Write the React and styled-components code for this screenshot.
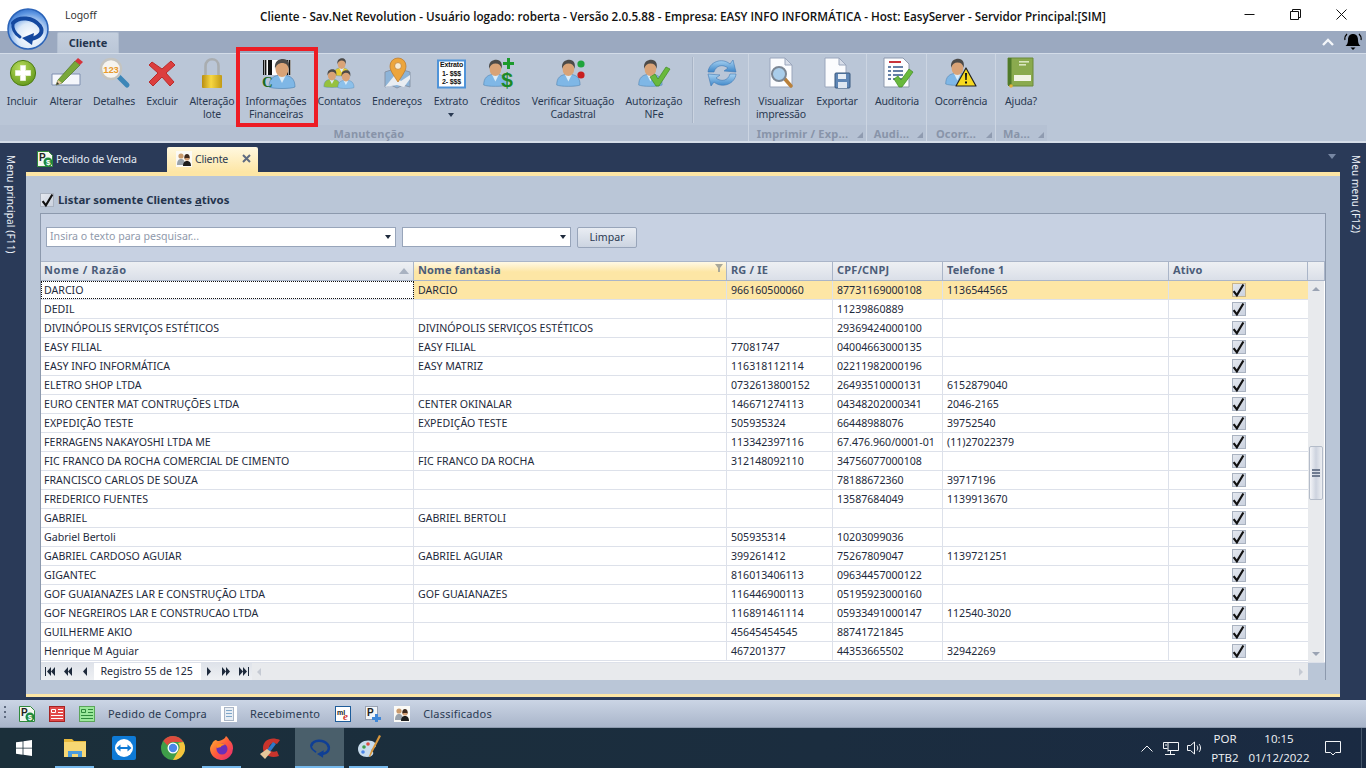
import React from 'react'
import styled, { createGlobalStyle } from 'styled-components'

const GlobalStyle = createGlobalStyle`
  html, body { margin: 0; padding: 0; height: 100%; overflow: hidden; }
  body { font-family: "Noto Sans", "Liberation Sans", sans-serif; font-size: 10.6px; color: #1e2a3c; }
  #root { width: 1366px; height: 768px; }
`

const Page = styled.div`
  position: relative;
  width: 1366px;
  height: 768px;
  display: flex;
  flex-direction: column;
  overflow: hidden;
`

/* ---------- title bar ---------- */
const TitleBar = styled.div`
  height: 31px;
  flex: none;
  background: #fff;
  display: grid;
  grid-template-columns: 1fr auto 1fr;
  align-items: center;
`
const Logoff = styled.div`
  padding: 0 0 0 65px;
  margin-top: -1px;
  font-size: 10.4px;
  color: #333;
`
const WindowTitle = styled.div`
  font-family: "Open Sans", sans-serif;
  font-size: 11.7px;
  font-weight: 600;
  color: #111;
  white-space: nowrap;
`
const WindowButtons = styled.div`
  display: flex;
  justify-content: flex-end;
  height: 31px;
  margin-right: 2px;
`
const WindowButton = styled.div`
  width: 46px;
  display: flex;
  align-items: center;
  justify-content: center;
  padding-bottom: 3px;
`
const LogoHolder = styled.div`
  position: absolute;
  left: 7px;
  top: 8px;
  width: 42px;
  height: 42px;
`

/* ---------- ribbon ---------- */
const TabStrip = styled.div`
  height: 22px;
  flex: none;
  background: #9ba9c0;
  display: flex;
  align-items: flex-end;
  justify-content: space-between;
  padding: 0 4px 0 57px;
`
const RibbonTab = styled.div`
  width: 62px;
  height: 21px;
  box-sizing: border-box;
  background: linear-gradient(#c4cfde, #bac6d7);
  border: 1px solid #b2bfd1;
  border-bottom: none;
  border-radius: 2px 2px 0 0;
  font-weight: 700;
  font-size: 11px;
  color: #24344d;
  text-align: center;
  line-height: 20px;
`
const TabStripTools = styled.div`
  display: flex;
  align-items: center;
  gap: 10px;
  height: 22px;
`
const Ribbon = styled.div`
  height: 90px;
  flex: none;
  box-sizing: border-box;
  background: #bac6d7;
  border-top: 1px solid #d3dce8;
  border-bottom: 2px solid #d5dde8;
  display: flex;
`
const RibbonGroup = styled.div`
  width: ${p => p.$w}px;
  flex: none;
  box-sizing: border-box;
  display: flex;
  flex-direction: column;
  border-right: ${p => (p.$last ? 'none' : '1px solid #ccd5e2')};
`
const GroupButtons = styled.div`
  height: 71px;
  display: flex;
  flex: none;
`
const GroupCaption = styled.div`
  position: relative;
  height: 16px;
  background: #b5c1d3;
  color: #8894a9;
  font-weight: 700;
  font-size: 11px;
  letter-spacing: 0.2px;
  text-align: center;
  line-height: 17px;
  padding-right: ${p => p.$pad}px;
`
const Launcher = styled.span`
  position: absolute;
  right: 3px;
  bottom: 3px;
  width: 0;
  height: 0;
  border-left: 6px solid transparent;
  border-bottom: 6px solid #8f9bb0;
`
const RibbonButton = styled.div`
  width: ${p => p.$w}px;
  flex: none;
  display: flex;
  flex-direction: column;
  align-items: center;
  padding-top: 3px;
  font-size: 10.5px;
  letter-spacing: -0.15px;
  line-height: 13px;
  color: #2a3a52;
  text-align: center;
  white-space: pre-line;
  svg { flex: none; margin-bottom: 6px; overflow: visible; }
`
const DropArrow = styled.span`
  width: 0;
  height: 0;
  margin-top: 5px;
  border-left: 3px solid transparent;
  border-right: 3px solid transparent;
  border-top: 4px solid #2a3a52;
`
const RibbonSeparator = styled.div`
  width: 1px;
  height: 66px;
  margin: 3px 4px 0 4px;
  flex: none;
  background: #a8b4c6;
  box-shadow: 1px 0 0 #cbd4e1;
`
const Highlight = styled.div`
  position: absolute;
  left: 236px;
  top: 47px;
  width: 82px;
  height: 80px;
  box-sizing: border-box;
  border: 4px solid #ed1c24;
`

/* ---------- workspace ---------- */
const Workspace = styled.div`
  flex: 1;
  min-height: 0;
  background: #2a3a58;
  display: flex;
`
const Rail = styled.div`
  width: 26px;
  flex: none;
  box-sizing: border-box;
  padding: 12px ${p => (p.$right ? 0 : 4)}px 0 ${p => (p.$right ? 6 : 0)}px;
  display: flex;
  justify-content: center;
`
const RailLabel = styled.div`
  writing-mode: vertical-rl;
  color: #eef2f8;
  font-size: 10px;
  letter-spacing: 0.15px;
  white-space: nowrap;
`
const Center = styled.div`
  flex: 1;
  min-width: 0;
  display: flex;
  flex-direction: column;
  padding-bottom: 3px;
`
const DocTabs = styled.div`
  height: 25px;
  margin-top: 4px;
  flex: none;
  display: flex;
  align-items: stretch;
  position: relative;
  padding-left: 2px;
`
const DocTab = styled.div`
  width: ${p => p.$w}px;
  box-sizing: border-box;
  display: flex;
  align-items: center;
  gap: 3px;
  padding: 0 7px 2px 9px;
  margin-right: 7px;
  letter-spacing: -0.2px;
  color: ${p => (p.$active ? '#2a3a52' : '#e6ecf4')};
  background: ${p => (p.$active ? 'linear-gradient(#fff8e0, #fde6a5)' : 'transparent')};
  border-radius: 2px 2px 0 0;
`
const TabClose = styled.span`
  margin-left: auto;
  display: flex;
`
const TabsMenu = styled.span`
  position: absolute;
  right: 4px;
  top: 7px;
  width: 0;
  height: 0;
  border-left: 4px solid transparent;
  border-right: 4px solid transparent;
  border-top: 5px solid #7787a3;
`
const Panel = styled.div`
  flex: 1;
  min-height: 0;
  box-sizing: border-box;
  background: #bac6d7;
  border-top: 4px solid #fde6a5;
  border-bottom: 3px solid #fde6a5;
  padding: 17px 14px 14px 14px;
  display: flex;
  flex-direction: column;
`
const ActiveFilter = styled.div`
  height: 14px;
  flex: none;
  display: flex;
  align-items: center;
  gap: 4px;
  margin-bottom: 6px;
  font-weight: 700;
  font-size: 11.4px;
  color: #24344d;
  span:last-child { margin-top: -2px; }
  u { text-underline-offset: 1px; }
`
const CheckBox = styled.span`
  width: 14px;
  height: 14px;
  flex: none;
  box-sizing: border-box;
  display: inline-flex;
  align-items: center;
  justify-content: center;
  background: linear-gradient(135deg, #e4e8ef, #cbd2df);
  border: 1px solid ${p => (p.$warm ? '#c9b58a' : '#a9b2c0')};
`
const GridBox = styled.div`
  flex: 1;
  min-height: 0;
  display: flex;
  flex-direction: column;
  background: #c7d1e2;
  border: 1px solid #8c99ad;
`
const SearchBar = styled.div`
  height: 47px;
  flex: none;
  box-sizing: border-box;
  padding: 13px 0 0 5px;
  display: flex;
  align-items: flex-start;
  gap: 6px;
`
const Combo = styled.div`
  width: ${p => p.$w}px;
  height: 20px;
  box-sizing: border-box;
  background: #fff;
  border: 1px solid #98a5ba;
  display: flex;
  align-items: center;
  justify-content: space-between;
  padding: 0 4px 2px 3px;
  color: #8f99ab;
`
const ComboArrow = styled.span`
  width: 0;
  height: 0;
  margin-top: 2px;
  border-left: 3.5px solid transparent;
  border-right: 3.5px solid transparent;
  border-top: 4px solid #1e2a3c;
`
const ClearButton = styled.div`
  width: 60px;
  height: 21px;
  box-sizing: border-box;
  background: linear-gradient(#e9edf3, #ccd4e1);
  border: 1px solid #98a5ba;
  border-radius: 2px;
  text-align: center;
  line-height: 18px;
  color: #2a3a52;
`
const columns = '373px 313px 106px 110px 226px 139px'
const HeaderRow = styled.div`
  height: 20px;
  flex: none;
  display: grid;
  grid-template-columns: ${columns} 1fr;
  border-top: 1px solid #aab5c8;
  border-bottom: 1px solid #aab5c8;
  box-sizing: border-box;
`
const HeaderCell = styled.div`
  position: relative;
  box-sizing: border-box;
  padding-left: ${p => (p.$first ? 3 : 4)}px;
  font-weight: 700;
  font-size: 11px;
  line-height: 16px;
  color: #4c5d79;
  letter-spacing: ${p => (p.$first ? 0.55 : 0.15)}px;
  background: ${p => (p.$hot ? 'linear-gradient(#fff9e6, #fde6a5 55%)' : 'linear-gradient(#eef0f3, #dadfe8)')};
  border-right: 1px solid #aab5c8;
`
const SortMark = styled.span`
  position: absolute;
  right: 4px;
  top: 6px;
  width: 0;
  height: 0;
  border-left: 5px solid transparent;
  border-right: 5px solid transparent;
  border-bottom: 6px solid #a9b2c1;
`
const FilterMark = styled.span`
  position: absolute;
  right: 3px;
  top: 2px;
  display: flex;
`
const Body = styled.div`
  height: 381px;
  flex: none;
  display: flex;
  background: #fff;
`
const Rows = styled.div`
  width: 1267px;
  flex: none;
`
const Row = styled.div`
  height: 19px;
  box-sizing: border-box;
  display: grid;
  grid-template-columns: ${columns};
  background: ${p => (p.$selected ? '#fde6a5' : '#fff')};
  border-bottom: 1px solid #dde1ea;
`
const Cell = styled.div`
  box-sizing: border-box;
  padding-left: ${p => (p.$first ? 3 : 4)}px;
  line-height: 18px;
  color: #1e2a3c;
  white-space: nowrap;
  overflow: hidden;
  border-right: 1px solid #dde1ea;
`
const FocusCell = styled(Cell)`
  background: #fff;
  outline: 1px dotted #111;
  outline-offset: -1px;
`
const CheckCell = styled(Cell)`
  display: flex;
  align-items: center;
  justify-content: center;
  padding: 0;
  border-right: none;
`
const VScroll = styled.div`
  position: relative;
  width: 16px;
  flex: none;
  background: #e8eaed;
`
const ScrollArrow = styled.span`
  position: absolute;
  left: 4px;
  width: 0;
  height: 0;
  border-left: 4px solid transparent;
  border-right: 4px solid transparent;
  ${p => (p.$up ? 'top: 6px; border-bottom: 4px solid #9aa3b3;' : 'bottom: 6px; border-top: 4px solid #9aa3b3;')}
`
const ScrollThumb = styled.div`
  position: absolute;
  left: 1px;
  top: 165px;
  width: 14px;
  height: 54px;
  box-sizing: border-box;
  border: 1px solid #b4bcc9;
  border-radius: 2px;
  background: linear-gradient(90deg, #f4f5f8, #cdd3df 50%, #eceef2);
  display: flex;
  flex-direction: column;
  justify-content: center;
  align-items: center;
  gap: 1px;
`
const Grip = styled.span`
  width: 8px;
  height: 2px;
  background: #6f7b90;
`
const Footer = styled.div`
  flex: 1;
  display: flex;
  border-top: 1px solid #dde1ea;
`
const Pager = styled.div`
  width: 211px;
  flex: none;
  background: linear-gradient(#dfe3ea, #eef0f3);
  display: flex;
  align-items: center;
`
const PagerButton = styled.span`
  width: ${p => p.$w || 18}px;
  display: flex;
  justify-content: center;
`
const PagerLabel = styled.div`
  width: 107px;
  height: 100%;
  flex: none;
  box-sizing: border-box;
  background: #fff;
  padding-left: 7px;
  line-height: 17px;
  color: #1e2a3c;
`
const HScroll = styled.div`
  flex: 1;
  background: #e8eaed;
  display: flex;
  align-items: center;
  justify-content: space-between;
  padding: 0 5px;
`
const HArrow = styled.span`
  width: 0;
  height: 0;
  border-top: 4px solid transparent;
  border-bottom: 4px solid transparent;
  ${p => (p.$left ? 'border-right: 4px solid #c5cad3;' : 'border-left: 4px solid #c5cad3;')}
`
const Corner = styled.div`
  width: 17px;
  flex: none;
  background: #bac6d7;
`

/* ---------- status bar and taskbar ---------- */
const StatusBar = styled.div`
  height: 28px;
  flex: none;
  box-sizing: border-box;
  background: linear-gradient(#cbd5e5, #a9b5ca);
  border-bottom: 1px solid #8c99ad;
  display: flex;
  align-items: center;
  padding-left: 4px;
`
const StatusGrip = styled.div`
  width: 2px;
  height: 15px;
  margin-right: 13px;
  background: repeating-linear-gradient(#5f6b80 0 2px, transparent 2px 5px);
`
const StatusIcon = styled.span`
  width: 16px;
  height: 16px;
  display: flex;
  margin-right: ${p => p.$gap}px;
`
const StatusText = styled.span`
  font-size: 11px;
  letter-spacing: 0.2px;
  color: #2a3a52;
  margin-right: ${p => p.$gap}px;
`
const Taskbar = styled.div`
  height: 40px;
  flex: none;
  background: linear-gradient(90deg, #1b2f3a, #1b2d3f 60%, #1a2a42);
  display: flex;
  color: #f2f4f7;
`
const StartSlot = styled.div`
  width: 50px;
  flex: none;
  display: flex;
  align-items: center;
  padding: 0 0 0 16px;
  box-sizing: border-box;
`
const TaskSlot = styled.div`
  position: relative;
  width: 49px;
  flex: none;
  display: flex;
  align-items: center;
  justify-content: center;
  background: ${p => (p.$active ? '#4a5f6b' : 'transparent')};
  &::after {
    content: '';
    display: ${p => (p.$open ? 'block' : 'none')};
    position: absolute;
    bottom: 0;
    height: 2px;
    left: ${p => (p.$active ? 0 : 5)}px;
    right: ${p => (p.$active ? 0 : 5)}px;
    background: #76b9ed;
  }
`
const Tray = styled.div`
  margin-left: auto;
  display: flex;
  align-items: center;
  height: 100%;
`
const TrayIcon = styled.span`
  display: flex;
  margin-right: ${p => p.$gap}px;
`
const TrayText = styled.div`
  width: ${p => p.$w}px;
  text-align: center;
  font-size: 11.5px;
  line-height: 19px;
  font-family: "Open Sans", sans-serif;
  margin-right: ${p => p.$gap || 0}px;
`
const ShowDesktop = styled.div`
  width: 4px;
  height: 100%;
  border-left: 1px solid #45566a;
`

/* ---------- drawn icons ---------- */
const Bust = ({ x = 0, y = 0, s = 1, shirt = '#7fb7e6' }) => (
  <g transform={`translate(${x} ${y}) scale(${s})`}>
    <path d="M3 30c0-8 4-12 13-12s13 4 13 12c-4 2-22 2-26 0z" fill={shirt} stroke="#4a7fae" strokeWidth=".6" />
    <path d="M12 18l4 8 4-8z" fill="#dcecf8" />
    <ellipse cx="16" cy="12" rx="6.5" ry="8" fill="#d9a377" />
    <path d="M9 12C8 4 13 2 17 2c5 0 7 4 6 10-1-4-3-6-7-6-3 0-6 2-7 6z" fill="#4c4a48" />
  </g>
)

const Barcode = () => (
  <g>
    <rect x="3" y="3" width="28" height="15" fill="#fff" />
    {[3, 5, 8, 10, 25, 27, 29].map(x => (
      <rect key={x} x={x} y="3" width={x % 2 ? 1.4 : 2} height="15" fill="#111" />
    ))}
  </g>
)

const icons = {
  plus: (
    <>
      <defs>
        <radialGradient id="ip" cx=".4" cy=".3" r=".8">
          <stop offset="0" stopColor="#b8dc5c" />
          <stop offset="1" stopColor="#5d9316" />
        </radialGradient>
      </defs>
      <circle cx="17" cy="16" r="12.6" fill="url(#ip)" stroke="#4d7d12" />
      <path d="M14.5 8.500h5v5h5v5h-5v5h-5v-5h-5v-5h5z" fill="#fff" stroke="#e3efd0" strokeLinejoin="round" />
    </>
  ),
  edit: (
    <>
      <path d="M2 17h28v11H2z" fill="#f4f6fb" stroke="#7f8fb0" />
      <path d="M8 23L25 4l5 4-18 18-6 2z" fill="#79a83a" stroke="#4d7425" strokeWidth=".7" />
      <path d="M25 4l3-3 5 4-3 3z" fill="#d4353c" />
      <path d="M8 23l4 3-6 2z" fill="#e9c9a0" />
      <path d="M6 28l1.500-3 1.500 2z" fill="#333" />
    </>
  ),
  details: (
    <>
      <path d="M20 19l9 9" stroke="#3c86b8" strokeWidth="5" strokeLinecap="round" />
      <circle cx="13" cy="12" r="10" fill="#f6f4ef" stroke="#c4c4c0" strokeWidth="2.4" />
      <text x="13" y="15.500" textAnchor="middle" fontFamily="Liberation Sans" fontWeight="700" fontSize="9.5" fill="#e99a2c">123</text>
    </>
  ),
  remove: (
    <path d="M6 5l10 7 9-8 4 4-9 8 8 9-4 4-8-9-9 9-4-4 9-9-9-8z" fill="#dc3e3e" stroke="#b92c2c" strokeWidth="1" strokeLinejoin="round" />
  ),
  lock: (
    <>
      <defs>
        <linearGradient id="il" x1="0" x2="1">
          <stop offset="0" stopColor="#b98e10" />
          <stop offset=".45" stopColor="#f7d743" />
          <stop offset="1" stopColor="#c29a15" />
        </linearGradient>
      </defs>
      <path d="M9.500 19V9c0-9 13-9 13 0v10" fill="none" stroke="#a9adb0" strokeWidth="2.6" />
      <rect x="6" y="18" width="20" height="13" rx="1" fill="url(#il)" />
    </>
  ),
  finance: (
    <>
      <Barcode />
      <Bust x={6} y={0} />
      <text x="2" y="30" fontFamily="Liberation Serif" fontWeight="700" fontSize="15" fill="#1c6b1e">C</text>
    </>
  ),
  contacts: (
    <>
      <Bust x={9} y={0} s={0.6} shirt="#e4cc33" />
      <Bust x={-1} y={11} s={0.62} shirt="#96c13d" />
      <Bust x={13} y={12} s={0.62} shirt="#8cc0ea" />
    </>
  ),
  map: (
    <>
      <path d="M4 15l6-2 6 3 6-3 7 2v15l-7-2-6 3-6-3-6 2z" fill="#8db4d8" stroke="#8895a8" />
      <path d="M4 30l9-11 7 5 9-6v4l-6 8-7-2z" fill="#e9edf2" />
      <path d="M17 25C11 16 9 13 9 9a8 8 0 0 1 16 0c0 4-2 7-8 16z" fill="#eda53c" stroke="#b9772a" strokeWidth=".7" />
      <circle cx="17" cy="9" r="3.400" fill="#f7ecd6" stroke="#b9772a" strokeWidth=".7" />
    </>
  ),
  statement: (
    <>
      <rect x="3" y="3.500" width="27" height="27" fill="#fff" stroke="#4f93d8" strokeWidth="2" />
      <text x="16.500" y="10" textAnchor="middle" fontFamily="Liberation Sans" fontWeight="700" fontSize="7" fill="#111">Extrato</text>
      <text x="16.500" y="19" textAnchor="middle" fontFamily="Liberation Sans" fontWeight="700" fontSize="7" fill="#111">1- $$$</text>
      <text x="16.500" y="27" textAnchor="middle" fontFamily="Liberation Sans" fontWeight="700" fontSize="7" fill="#111">2- $$$</text>
    </>
  ),
  credit: (
    <>
      <Bust x={-3} y={1} s={0.9} />
      <path d="M23 1h3v4h4v3h-4v4h-3V8h-4V5h4z" fill="#1c9a2c" />
      <text x="23" y="30" textAnchor="middle" fontFamily="Liberation Sans" fontWeight="700" fontSize="21" fill="#1c8a26">$</text>
    </>
  ),
  verify: (
    <>
      <Bust x={-3} y={1} s={0.9} />
      <circle cx="24" cy="7" r="3.600" fill="#1fa43c" />
      <circle cx="24" cy="18" r="3.600" fill="#c81e1e" />
    </>
  ),
  authorize: (
    <>
      <Bust x={-2} y={1} s={0.9} />
      <path d="M12 20l5-3 3 5 8-12 4 2-11 17h-3z" fill="#69b93d" stroke="#3f8b22" strokeWidth=".7" />
    </>
  ),
  refresh: (
    <>
      <defs>
        <linearGradient id="ir" x1="0" y1="0" x2="0" y2="1">
          <stop offset="0" stopColor="#a7d2f2" />
          <stop offset="1" stopColor="#3f87c9" />
        </linearGradient>
      </defs>
      <path d="M2 15C3 5 16 0 24 7l3-4 3 12-12-1 4-3c-5-4-12-3-14 4z" fill="url(#ir)" stroke="#3f79b4" strokeWidth=".6" />
      <path d="M30 17c-1 10-14 15-22 8l-3 4-3-12 12 1-4 3c5 4 12 3 14-4z" fill="url(#ir)" stroke="#3f79b4" strokeWidth=".6" />
    </>
  ),
  preview: (
    <>
      <path d="M5 1h15l7 7v22H5z" fill="#fbfcfe" stroke="#9aa6bc" />
      <path d="M20 1v7h7z" fill="#d8dee9" stroke="#9aa6bc" />
      <path d="M19 21l7 8" stroke="#b9803a" strokeWidth="3.500" strokeLinecap="round" />
      <circle cx="14" cy="17" r="7" fill="#a9cdea" stroke="#7c8794" strokeWidth="2" />
    </>
  ),
  export: (
    <>
      <path d="M4 1h14l7 7v22H4z" fill="#fbfcfe" stroke="#9aa6bc" />
      <path d="M18 1v7h7z" fill="#d8dee9" stroke="#9aa6bc" />
      <rect x="14" y="16" width="15" height="15" rx="1" fill="#5f86b5" stroke="#38587f" />
      <rect x="17" y="17" width="8" height="5" fill="#e7eef6" />
      <rect x="17" y="25" width="9" height="6" fill="#dfe7f1" />
    </>
  ),
  audit: (
    <>
      <path d="M3 1h19l6 6v23H3z" fill="#fcfdfe" stroke="#8d99ad" />
      <rect x="8" y="4" width="12" height="2" fill="#c8323a" />
      {[10, 14, 18, 22].map(y => (
        <path key={y} d={`M7 ${y}h3m2 0h10`} stroke="#33578a" strokeWidth="1.400" />
      ))}
      <path d="M13 22l4-3 3 4 8-11 4 3-11 15h-3z" fill="#69b93d" stroke="#3f8b22" strokeWidth=".7" />
    </>
  ),
  alert: (
    <>
      <Bust x={-2} y={0} s={0.9} />
      <path d="M21 11l10 18H11z" fill="#f7d91f" stroke="#222" strokeWidth="1.200" strokeLinejoin="round" />
      <path d="M20 16h2l-.3 7h-1.400zM20 24.500h2v2h-2z" fill="#111" />
    </>
  ),
  help: (
    <>
      <path d="M3 1h25v28H5c-1.500 0-2-1-2-2z" fill="#8aaa4e" stroke="#6a8a38" />
      <rect x="3" y="1" width="3.500" height="28" fill="#4f7a2a" />
      <rect x="14" y="4" width="10" height="1.600" fill="#d9e6bf" />
      <rect x="14" y="7" width="7" height="1.600" fill="#d9e6bf" />
      <rect x="9" y="18" width="17" height="6" fill="#f1f3e4" />
      <circle cx="6" cy="29" r="1.800" fill="#e5b23a" />
    </>
  ),
}

const RibbonIcon = ({ name }) => (
  <svg width="32" height="32" viewBox="0 0 32 32">{icons[name]}</svg>
)

const smallIcons = {
  sale: (
    <>
      <path d="M.5.500h11l4 4v11H.5z" fill="#f4f7ee" stroke="#2f8a3c" />
      <text x="2" y="10" fontFamily="Liberation Sans" fontWeight="700" fontSize="10" fill="#222">P</text>
      <circle cx="11" cy="11" r="4.500" fill="#1f8a3c" />
      <text x="11" y="14" textAnchor="middle" fontFamily="Liberation Sans" fontWeight="700" fontSize="8" fill="#fff">$</text>
    </>
  ),
  red: (
    <>
      <rect x=".5" y=".5" width="15" height="15" fill="#e24a4a" stroke="#a52222" />
      <path d="M2.500 3.500h4v3h-4zM9 3.500h5M9 6.500h5M2 9.500h12M2 12.500h12" stroke="#fff" fill="none" />
    </>
  ),
  green: (
    <>
      <rect x=".5" y=".5" width="15" height="15" fill="#9be89b" stroke="#5aa65a" />
      <path d="M2.500 3.500h4v3h-4zM9 3.500h5M9 6.500h5M2 9.500h12M2 12.500h12" stroke="#2f8a3c" fill="none" />
    </>
  ),
  doc: (
    <>
      <rect x="0" y="0" width="16" height="16" fill="#fff" />
      <rect x="3.500" y="1.500" width="9" height="13" fill="#e7edf4" stroke="#a9b5c6" />
      <path d="M5 4.500h6M5 7.500h6M5 10.500h6" stroke="#7fa7c9" />
    </>
  ),
  market: (
    <>
      <rect x=".5" y=".5" width="15" height="15" fill="#fff" stroke="#1d5c9a" />
      <text x="2" y="9" fontFamily="Liberation Sans" fontWeight="700" fontSize="7" fill="#222">ml</text>
      <text x="8" y="14" fontFamily="Liberation Serif" fontStyle="italic" fontWeight="700" fontSize="11" fill="#d0342c">e</text>
    </>
  ),
  add: (
    <>
      <rect x=".5" y=".5" width="12" height="13" fill="#f2f4f7" stroke="#98a2b2" />
      <text x="2" y="10" fontFamily="Liberation Sans" fontWeight="700" fontSize="10" fill="#222">P</text>
      <path d="M10 8h3v3h3v3h-3v2h-3v-2H7v-3h3z" fill="#3f87d8" />
    </>
  ),
  people: (
    <>
      <rect width="16" height="16" fill="#fbfaf6" />
      <circle cx="5" cy="5" r="2.600" fill="#c99a6c" />
      <path d="M1 14c0-5 2-6 4-6s4 1 4 6z" fill="#9aa3ac" />
      <circle cx="11" cy="7" r="2.600" fill="#d9a377" />
      <path d="M8.300 7c0-3 1-4 2.700-4s2.700 1 2.700 4c0 1-1 0-2.700 0S8.300 8 8.300 7z" fill="#3e2a1e" />
      <path d="M7 15c0-4 2-5 4-5s4 1 4 5z" fill="#1d1d1d" />
    </>
  ),
}

const SmallIcon = ({ name }) => (
  <svg width="16" height="16" viewBox="0 0 16 16" style={{ overflow: 'visible' }}>{smallIcons[name]}</svg>
)

const Swirl = ({ size = 24, color = '#0f3f95', width = 3.4 }) => (
  <svg width={size} height={size} viewBox="0 0 32 32" style={{ overflow: 'visible' }}>
    <path d="M5 12C7 5 20 4 26 11c4 6 1 12-8 13" fill="none" stroke={color} strokeWidth={width} strokeLinecap="round" />
    <path d="M5 10c-2 4 0 8 5 11" fill="none" stroke={color} strokeWidth={width * 0.7} strokeLinecap="round" />
    <path d="M21 19l-9 5 8 5z" fill={color} />
  </svg>
)

const Logo = () => (
  <svg width="42" height="42" viewBox="0 0 42 42">
    <defs>
      <radialGradient id="lg" cx=".55" cy=".68" r=".72">
        <stop offset="0" stopColor="#ffffff" />
        <stop offset=".45" stopColor="#dbe9f9" />
        <stop offset=".8" stopColor="#5f97e2" />
        <stop offset="1" stopColor="#2f6cc8" />
      </radialGradient>
    </defs>
    <circle cx="21" cy="21" r="20" fill="url(#lg)" stroke="#2a63b8" strokeWidth="1.500" />
    <path d="M6 15C12 8 26 9 33 18c4 6 0 11-9 13" fill="none" stroke="#14489f" strokeWidth="4" strokeLinecap="round" />
    <path d="M6 15c-1 6 1 10 7 14" fill="none" stroke="#14489f" strokeWidth="3" strokeLinecap="round" />
    <path d="M27 25l-12 5 10 7z" fill="#14489f" />
  </svg>
)

const Check = () => (
  <svg width="13" height="13" viewBox="0 0 12 12" style={{ overflow: 'visible' }}>
    <path d="M1.500 6.500L4.500 10.500 10.500 .5" fill="none" stroke="#111" strokeWidth="2" />
  </svg>
)

const PagerGlyph = ({ d }) => (
  <svg width="12" height="9" viewBox="0 0 12 9"><path d={d} fill="#1e2a3c" /></svg>
)
const pagerGlyphs = {
  first: 'M1 0h1v9H1zM7 0v9L3 4.500zM11 0v9L7 4.500z',
  prevPage: 'M6 0v9L2 4.500zM10 0v9L6 4.500z',
  prev: 'M8 0v9L4 4.500z',
  next: 'M4 0v9l4-4.500z',
  nextPage: 'M2 0v9l4-4.500zM6 0v9l4-4.500z',
  last: 'M1 0v9l4-4.500zM5 0v9l4-4.500zM10 0h1v9h-1z',
}

const Win = () => (
  <svg width="16" height="16" viewBox="0 0 16 16">
    <path d="M0 2.300l6.600-.9v6.300H0zM7.400 1.300L16 0v7.700H7.400zM0 8.400h6.600v6.300L0 13.800zM7.400 8.400H16V16l-8.600-1.200z" fill="#fff" />
  </svg>
)

const Folder = () => (
  <svg width="22" height="20" viewBox="0 0 22 20">
    <path d="M0 1h8l2 2h12v16H0z" fill="#e8b93c" />
    <rect y="4" width="22" height="15" fill="#f7d774" />
    <path d="M4 19v-6h14v6h-4v-3H8v3z" fill="#4a9bdc" />
  </svg>
)

const TeamViewer = () => (
  <svg width="24" height="24" viewBox="0 0 24 24">
    <rect width="24" height="24" rx="2" fill="#0e7ad6" />
    <circle cx="12" cy="12" r="9" fill="#fff" />
    <path d="M4.500 12l4-3.500V11h7V8.500l4 3.500-4 3.500V13h-7v2.500z" fill="#0e7ad6" />
  </svg>
)

const Chrome = () => (
  <svg width="24" height="24" viewBox="0 0 24 24">
    <circle cx="12" cy="12" r="12" fill="#3f9e49" />
    <path d="M12 0a12 12 0 0 1 10.400 6H12a6 6 0 0 0-5.500 3.600L2.300 5A12 12 0 0 1 12 0z" fill="#dd4b3e" />
    <path d="M22.400 6A12 12 0 0 1 12 24l5.200-9A6 6 0 0 0 17 7z" fill="#f5c33c" />
    <circle cx="12" cy="12" r="5.500" fill="#fff" />
    <circle cx="12" cy="12" r="4.200" fill="#4a86e8" />
  </svg>
)

const Firefox = () => (
  <svg width="24" height="24" viewBox="0 0 24 24">
    <defs>
      <linearGradient id="ff" x1="0" y1="0" x2="1" y2="1">
        <stop offset="0" stopColor="#ffbd30" />
        <stop offset=".5" stopColor="#ff5a3c" />
        <stop offset="1" stopColor="#e3267a" />
      </linearGradient>
    </defs>
    <path d="M2 8c1-3 3-4 4-4 1 1 2 1 3 1 3-1 6-2 7-5 2 2 3 3 3 4 3 2 4 5 4 8a11.500 11.500 0 0 1-23 1c0-2 1-4 2-5z" fill="url(#ff)" />
    <circle cx="12" cy="13" r="5.500" fill="#6b2fb8" />
    <path d="M6 9c3-2 7-2 9 0-3 0-4 1-4 2l-4 1z" fill="#ff8a1f" />
  </svg>
)

const CCleaner = () => (
  <svg width="24" height="24" viewBox="0 0 24 24">
    <path d="M21 4C12 0 4 4 4 12c0 7 8 11 16 8l-2-5c-4 2-8 0-8-3 0-4 4-6 8-4z" fill="#c9342c" />
    <path d="M14 6L8 14l3 2 6-8z" fill="#2e78c8" />
    <path d="M8 13l-7 5 5 5 6-7z" fill="#e5c69a" />
  </svg>
)

const Palette = () => (
  <svg width="28" height="28" viewBox="0 0 28 28">
    <path d="M3 15C3 8 11 5 17 7c5 2 5 6 2 7-3 1-3 3-1 4 1 2-1 5-6 5-5 0-9-3-9-8z" fill="#c8dcec" />
    <circle cx="9" cy="13" r="1.800" fill="#3f9e49" />
    <circle cx="13" cy="10" r="1.800" fill="#dd4b3e" />
    <circle cx="8" cy="18" r="1.800" fill="#4a86e8" />
    <path d="M26 2l-9 17-2 4-1-1 2-5L24 1z" fill="#d9973c" />
  </svg>
)

const rows = [
  ['DARCIO', 'DARCIO', '966160500060', '87731169000108', '1136544565'],
  ['DEDIL', '', '', '11239860889', ''],
  ['DIVINÓPOLIS SERVIÇOS ESTÉTICOS', 'DIVINÓPOLIS SERVIÇOS ESTÉTICOS', '', '29369424000100', ''],
  ['EASY FILIAL', 'EASY FILIAL', '77081747', '04004663000135', ''],
  ['EASY INFO INFORMÁTICA', 'EASY MATRIZ', '116318112114', '02211982000196', ''],
  ['ELETRO SHOP LTDA', '', '0732613800152', '26493510000131', '6152879040'],
  ['EURO CENTER MAT CONTRUÇÕES LTDA', 'CENTER OKINALAR', '146671274113', '04348202000341', '2046-2165'],
  ['EXPEDIÇÃO TESTE', 'EXPEDIÇÃO TESTE', '505935324', '66448988076', '39752540'],
  ['FERRAGENS NAKAYOSHI LTDA ME', '', '113342397116', '67.476.960/0001-01', '(11)27022379'],
  ['FIC FRANCO DA ROCHA COMERCIAL DE CIMENTO', 'FIC FRANCO DA ROCHA', '312148092110', '34756077000108', ''],
  ['FRANCISCO CARLOS DE SOUZA', '', '', '78188672360', '39717196'],
  ['FREDERICO FUENTES', '', '', '13587684049', '1139913670'],
  ['GABRIEL', 'GABRIEL BERTOLI', '', '', ''],
  ['Gabriel Bertoli', '', '505935314', '10203099036', ''],
  ['GABRIEL CARDOSO AGUIAR', 'GABRIEL AGUIAR', '399261412', '75267809047', '1139721251'],
  ['GIGANTEC', '', '816013406113', '09634457000122', ''],
  ['GOF GUAIANAZES LAR E CONSTRUÇÃO LTDA', 'GOF GUAIANAZES', '116446900113', '05195923000160', ''],
  ['GOF NEGREIROS LAR E CONSTRUCAO LTDA', '', '116891461114', '05933491000147', '112540-3020'],
  ['GUILHERME AKIO', '', '45645454545', '88741721845', ''],
  ['Henrique M Aguiar', '', '467201377', '44353665502', '32942269'],
]

const ribbonGroups = [
  {
    caption: 'Manutenção',
    w: 749,
    pad: 10,
    buttons: [
      { icon: 'plus', label: 'Incluir', w: 44 },
      { icon: 'edit', label: 'Alterar', w: 44 },
      { icon: 'details', label: 'Detalhes', w: 52 },
      { icon: 'remove', label: 'Excluir', w: 44 },
      { icon: 'lock', label: 'Alteração\nlote', w: 56 },
      { icon: 'finance', label: 'Informações\nFinanceiras', w: 72 },
      { icon: 'contacts', label: 'Contatos', w: 54 },
      { icon: 'map', label: 'Endereços', w: 62 },
      { icon: 'statement', label: 'Extrato', w: 46, drop: true },
      { icon: 'credit', label: 'Créditos', w: 52 },
      { icon: 'verify', label: 'Verificar Situação\nCadastral', w: 94 },
      { icon: 'authorize', label: 'Autorização\nNFe', w: 68 },
      { separator: true },
      { icon: 'refresh', label: 'Refresh', w: 50 },
    ],
  },
  {
    caption: 'Imprimir / Exp...',
    w: 118,
    pad: 10,
    launcher: true,
    buttons: [
      { icon: 'preview', label: 'Visualizar\nimpressão', w: 64 },
      { icon: 'export', label: 'Exportar', w: 48 },
    ],
  },
  { caption: 'Audi...', w: 60, pad: 10, launcher: true, buttons: [{ icon: 'audit', label: 'Auditoria', w: 60 }] },
  { caption: 'Ocorr...', w: 69, pad: 10, launcher: true, buttons: [{ icon: 'alert', label: 'Ocorrência', w: 68 }] },
  { caption: 'Ma...', w: 51, pad: 10, launcher: true, last: true, buttons: [{ icon: 'help', label: 'Ajuda?', w: 50 }] },
]

const headers = ['Nome / Razão', 'Nome fantasia', 'RG / IE', 'CPF/CNPJ', 'Telefone 1', 'Ativo', '']

function App() {
  return (
    <Page>
      <GlobalStyle />
      <TitleBar>
        <Logoff>Logoff</Logoff>
        <WindowTitle>
          Cliente - Sav.Net Revolution - Usuário logado: roberta - Versão 2.0.5.88 - Empresa: EASY INFO INFORMÁTICA - Host: EasyServer - Servidor Principal:[SIM]
        </WindowTitle>
        <WindowButtons>
          <WindowButton>
            <svg width="11" height="11" viewBox="0 0 11 11"><path d="M.5 5.500h10" stroke="#111" /></svg>
          </WindowButton>
          <WindowButton>
            <svg width="11" height="11" viewBox="0 0 11 11"><path d="M.5 2.500h8v8h-8zM2.500 2.500v-2h8v8h-2" fill="none" stroke="#111" /></svg>
          </WindowButton>
          <WindowButton>
            <svg width="11" height="11" viewBox="0 0 11 11"><path d="M.5.500l10 10M10.500.500l-10 10" stroke="#111" /></svg>
          </WindowButton>
        </WindowButtons>
      </TitleBar>

      <TabStrip>
        <RibbonTab>Cliente</RibbonTab>
        <TabStripTools>
          <svg width="12" height="8" viewBox="0 0 12 8"><path d="M1 7l5-5 5 5" fill="none" stroke="#f4f6f9" strokeWidth="2.400" /></svg>
          <svg width="18" height="18" viewBox="0 0 18 18">
            <path d="M9 1c3 0 5 2 5 6 0 3 1 5 2.500 6h-15C3 12 4 10 4 7c0-4 2-6 5-6z" fill="#000" />
            <path d="M6.500 14.500h5L9 17z" fill="#000" />
            <path d="M3 1C1 3 .5 5 1 7M15 1c2 2 2.500 4 2 6" fill="none" stroke="#000" strokeWidth="1.200" />
          </svg>
        </TabStripTools>
      </TabStrip>

      <Ribbon>
        {ribbonGroups.map(group => (
          <RibbonGroup key={group.caption} $w={group.w} $last={group.last}>
            <GroupButtons>
              {group.buttons.map((b, i) =>
                b.separator ? (
                  <RibbonSeparator key={i} />
                ) : (
                  <RibbonButton key={b.icon} $w={b.w}>
                    <RibbonIcon name={b.icon} />
                    {b.label}
                    {b.drop && <DropArrow />}
                  </RibbonButton>
                )
              )}
            </GroupButtons>
            <GroupCaption $pad={group.pad}>
              {group.caption}
              {group.launcher && <Launcher />}
            </GroupCaption>
          </RibbonGroup>
        ))}
      </Ribbon>

      <Workspace>
        <Rail><RailLabel>Menu principal (F11)</RailLabel></Rail>
        <Center>
          <DocTabs>
            <DocTab $w={132}><SmallIcon name="sale" />Pedido de Venda</DocTab>
            <DocTab $w={91} $active>
              <SmallIcon name="people" />Cliente
              <TabClose>
                <svg width="9" height="9" viewBox="0 0 9 9"><path d="M1 1l7 7M8 1L1 8" stroke="#5f6b80" strokeWidth="2" /></svg>
              </TabClose>
            </DocTab>
            <TabsMenu />
          </DocTabs>
          <Panel>
            <ActiveFilter>
              <CheckBox><Check /></CheckBox>
              <span>Listar somente Clientes <u>a</u>tivos</span>
            </ActiveFilter>
            <GridBox>
              <SearchBar>
                <Combo $w={350}>Insira o texto para pesquisar...<ComboArrow /></Combo>
                <Combo $w={169}><span /><ComboArrow /></Combo>
                <ClearButton>Limpar</ClearButton>
              </SearchBar>
              <HeaderRow>
                {headers.map((h, i) => (
                  <HeaderCell key={i} $hot={i === 1} $first={i === 0}>
                    {h}
                    {i === 0 && <SortMark />}
                    {i === 1 && (
                      <FilterMark>
                        <svg width="8" height="8" viewBox="0 0 8 8"><path d="M0 0h8L5 4v4H3V4z" fill="#a9a89a" /></svg>
                      </FilterMark>
                    )}
                  </HeaderCell>
                ))}
              </HeaderRow>
              <Body>
                <Rows>
                  {rows.map((row, r) => (
                    <Row key={row[0]} $selected={r === 0}>
                      {row.map((value, c) =>
                        r === 0 && c === 0
                          ? <FocusCell key={c} $first>{value}</FocusCell>
                          : <Cell key={c} $first={c === 0}>{value}</Cell>
                      )}
                      <CheckCell>
                        <CheckBox $warm={r === 0}><Check /></CheckBox>
                      </CheckCell>
                    </Row>
                  ))}
                </Rows>
                <VScroll>
                  <ScrollArrow $up />
                  <ScrollThumb><Grip /><Grip /><Grip /></ScrollThumb>
                  <ScrollArrow />
                </VScroll>
              </Body>
              <Footer>
                <Pager>
                  <PagerButton $w={18}><PagerGlyph d={pagerGlyphs.first} /></PagerButton>
                  <PagerButton $w={18}><PagerGlyph d={pagerGlyphs.prevPage} /></PagerButton>
                  <PagerButton $w={17}><PagerGlyph d={pagerGlyphs.prev} /></PagerButton>
                  <PagerLabel>Registro 55 de 125</PagerLabel>
                  <PagerButton $w={17}><PagerGlyph d={pagerGlyphs.next} /></PagerButton>
                  <PagerButton $w={18}><PagerGlyph d={pagerGlyphs.nextPage} /></PagerButton>
                  <PagerButton $w={17}><PagerGlyph d={pagerGlyphs.last} /></PagerButton>
                </Pager>
                <HScroll><HArrow $left /><HArrow /></HScroll>
                <Corner />
              </Footer>
            </GridBox>
          </Panel>
        </Center>
        <Rail $right><RailLabel>Meu menu (F12)</RailLabel></Rail>
      </Workspace>

      <StatusBar>
        <StatusGrip />
        <StatusIcon $gap={14}><SmallIcon name="sale" /></StatusIcon>
        <StatusIcon $gap={14}><SmallIcon name="red" /></StatusIcon>
        <StatusIcon $gap={13}><SmallIcon name="green" /></StatusIcon>
        <StatusText $gap={14}>Pedido de Compra</StatusText>
        <StatusIcon $gap={13}><SmallIcon name="doc" /></StatusIcon>
        <StatusText $gap={15}>Recebimento</StatusText>
        <StatusIcon $gap={14}><SmallIcon name="market" /></StatusIcon>
        <StatusIcon $gap={13}><SmallIcon name="add" /></StatusIcon>
        <StatusIcon $gap={13}><SmallIcon name="people" /></StatusIcon>
        <StatusText>Classificados</StatusText>
      </StatusBar>

      <Taskbar>
        <StartSlot><Win /></StartSlot>
        <TaskSlot $open><Folder /></TaskSlot>
        <TaskSlot><TeamViewer /></TaskSlot>
        <TaskSlot><Chrome /></TaskSlot>
        <TaskSlot $open><Firefox /></TaskSlot>
        <TaskSlot><CCleaner /></TaskSlot>
        <TaskSlot $open $active><Swirl size={24} /></TaskSlot>
        <TaskSlot $open><Palette /></TaskSlot>
        <Tray>
          <TrayIcon $gap={10}>
            <svg width="12" height="7" viewBox="0 0 12 7"><path d="M.5 6.500L6 1l5.500 5.500" fill="none" stroke="#f2f4f7" /></svg>
          </TrayIcon>
          <TrayIcon $gap={8}>
            <svg width="16" height="14" viewBox="0 0 16 14"><path d="M.5 1.500h15v8H5M.5 1.500v6h4M5 1.500v9M2 13.500h10M7.500 9.500v4M2 4h2" fill="none" stroke="#f2f4f7" /></svg>
          </TrayIcon>
          <TrayIcon $gap={4}>
            <svg width="16" height="14" viewBox="0 0 16 14"><path d="M.5 4.500h3l4-3.500v12l-4-3.500h-3zM10 4.500c1 1.500 1 3.500 0 5M12 3c2 2 2 6 0 8" fill="none" stroke="#f2f4f7" /></svg>
          </TrayIcon>
          <TrayText $w={36} $gap={2}>POR<br />PTB2</TrayText>
          <TrayText $w={68} $gap={12}>10:15<br />01/12/2022</TrayText>
          <TrayIcon $gap={20}>
            <svg width="16" height="16" viewBox="0 0 16 16"><path d="M.5 1.500h15v11h-5l-2.500 2.500-2.500-2.500h-5z" fill="none" stroke="#f2f4f7" /></svg>
          </TrayIcon>
          <ShowDesktop />
        </Tray>
      </Taskbar>

      <LogoHolder><Logo /></LogoHolder>
      <Highlight />
    </Page>
  )
}

export default App
